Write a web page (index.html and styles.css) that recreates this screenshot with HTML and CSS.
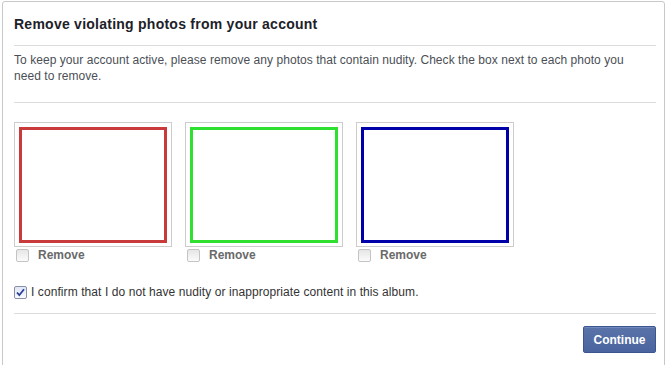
FILE: index.html
```html
<!DOCTYPE html>
<html lang="en">
<head>
<meta charset="utf-8">
<title>Remove violating photos</title>
<link rel="stylesheet" href="styles.css">
</head>
<body>
<div class="dialog">
  <div class="header">
    <h1 class="title">Remove violating photos from your account</h1>
  </div>
  <div class="intro">
    <p class="intro-text">To keep your account active, please remove any photos that contain nudity. Check the box next to each photo you need to remove.</p>
  </div>
  <div class="photos">
    <div class="photo">
      <div class="frame"><div class="pic pic-red"></div></div>
      <label class="remove"><span class="cb"></span>Remove</label>
    </div>
    <div class="photo">
      <div class="frame"><div class="pic pic-green"></div></div>
      <label class="remove"><span class="cb"></span>Remove</label>
    </div>
    <div class="photo">
      <div class="frame"><div class="pic pic-blue"></div></div>
      <label class="remove"><span class="cb"></span>Remove</label>
    </div>
  </div>
  <div class="confirm">
    <span class="cb cb-checked"><svg width="11" height="11" viewBox="0 0 11 11"><path d="M2 5.5 L4.3 8.2 L9 2.2" fill="none" stroke="#2b3f9a" stroke-width="1.8"/></svg></span>
    <span class="confirm-text">I confirm that I do not have nudity or inappropriate content in this album.</span>
  </div>
  <div class="footer">
    <button class="btn">Continue</button>
  </div>
</div>
</body>
</html>
```

FILE: styles.css
```css
html, body {
  margin: 0;
  padding: 0;
  background: #ffffff;
}
body {
  padding: 1px 0 0 2px;
  font-family: "Liberation Sans", Arial, sans-serif;
  font-size: 12px;
  color: #333333;
  overflow: hidden;
}
.dialog {
  width: 642px;
  border: 1px solid #c8c8c8;
  border-radius: 3px;
  padding: 0 8px 14px 11px;
  background: #ffffff;
}
.header {
  padding: 13px 0 12px;
  border-bottom: 1px solid #dcdcdc;
}
.title {
  margin: 0;
  font-size: 14px;
  line-height: 18px;
  font-weight: bold;
  color: #1d2129;
  letter-spacing: 0.25px;
}
.intro {
  padding: 6px 0 18px;
  border-bottom: 1px solid #dcdcdc;
}
.intro-text {
  margin: 0;
  max-width: 626px;
  font-size: 12px;
  line-height: 16px;
  color: #4b4f56;
  letter-spacing: 0.05px;
}
.photos {
  display: flex;
  gap: 13px;
  margin-top: 19px;
}
.photo {
  width: 158px;
}
.frame {
  box-sizing: border-box;
  width: 158px;
  height: 125px;
  border: 1px solid #cccccc;
  padding: 4px 4px 3px 4px;
}
.pic {
  box-sizing: border-box;
  width: 100%;
  height: 100%;
  border: 3px solid;
  background: #ffffff;
}
.pic-red { border-color: #c93a3a; }
.pic-green { border-color: #30e030; }
.pic-blue { border-color: #0000aa; }
.remove {
  display: flex;
  align-items: center;
  height: 16px;
  font-weight: bold;
  color: #6a6a6a;
  line-height: 16px;
}
.cb {
  box-sizing: border-box;
  display: inline-flex;
  align-items: center;
  justify-content: center;
  width: 13px;
  height: 13px;
  border: 1px solid #c4c4c4;
  border-radius: 2px;
  background: linear-gradient(#e6e6e6, #fbfbfb);
  flex-shrink: 0;
}
.remove .cb {
  margin: 0 9px 0 2px;
}
.cb-checked {
  border-color: #8a8fa8;
  background: linear-gradient(#dfe6f5, #f8faff);
}
.cb-checked svg {
  display: block;
}
.confirm {
  display: flex;
  align-items: center;
  height: 16px;
  line-height: 16px;
  margin-top: 21px;
  padding-bottom: 13px;
  border-bottom: 1px solid #dcdcdc;
}
.confirm .cb {
  margin-right: 4px;
}
.confirm-text {
  color: #333333;
  letter-spacing: 0.08px;
}
.footer {
  display: flex;
  justify-content: flex-end;
  padding-top: 12px;
}
.btn {
  box-sizing: border-box;
  width: 73px;
  height: 27px;
  border: 1px solid #3b5590;
  border-radius: 2px;
  background: linear-gradient(#5a73a8, #4a64a0);
  color: #ffffff;
  font-family: "Liberation Sans", Arial, sans-serif;
  font-size: 12px;
  font-weight: bold;
  padding: 0;
  box-shadow: inset 0 1px 0 #7088bb;
}
```
